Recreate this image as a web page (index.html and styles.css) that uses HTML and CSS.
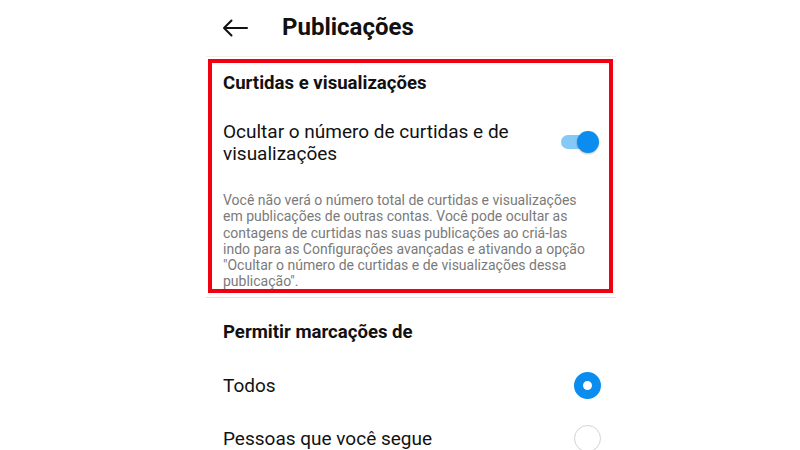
FILE: index.html
```html
<!DOCTYPE html>
<html lang="pt-BR">
<head>
<meta charset="utf-8">
<title>Publicações</title>
<link rel="stylesheet" href="styles.css">
</head>
<body>
<div class="screen">
  <header class="topbar">
    <svg class="back" width="26" height="18" viewBox="0 0 26 18" aria-hidden="true">
      <path d="M25 9H2M9.5 1.5L2 9l7.5 7.5" fill="none" stroke="#111" stroke-width="2" stroke-linecap="round" stroke-linejoin="round"/>
    </svg>
    <h1 class="title">Publicações</h1>
  </header>

  <section class="highlight">
    <h2 class="section-title">Curtidas e visualizações</h2>
    <div class="setting-row">
      <span class="setting-label">Ocultar o número de curtidas e de visualizações</span>
      <span class="switch"><span class="knob"></span></span>
    </div>
    <p class="hint">Você não verá o número total de curtidas e visualizações em publicações de outras contas. Você pode ocultar as contagens de curtidas nas suas publicações ao criá-las indo para as Configurações avançadas e ativando a opção "Ocultar o número de curtidas e de visualizações dessa publicação".</p>
  </section>

  <div class="divider"></div>

  <section class="group">
    <h2 class="section-title">Permitir marcações de</h2>
    <div class="option">
      <span class="option-label">Todos</span>
      <span class="radio checked"></span>
    </div>
    <div class="option">
      <span class="option-label">Pessoas que você segue</span>
      <span class="radio"></span>
    </div>
  </section>
</div>
</body>
</html>
```

FILE: styles.css
```css
* { box-sizing: border-box; }

html, body {
  margin: 0;
  padding: 0;
  background: #fff;
  font-family: Roboto, "Noto Sans", sans-serif;
  color: #111;
}

.screen {
  width: 410px;
  margin-left: 206px;
  height: 450px;
  overflow: hidden;
}

.topbar {
  display: flex;
  align-items: center;
  height: 57px;
  padding-left: 16px;
  border-bottom: 1px solid #f6eded;
}

.back { display: block; }

.title {
  margin: -2px 0 0 34px;
  font-size: 24px;
  font-weight: 700;
}

.highlight {
  margin: 2px 3px 0 2px;
  border: 4px solid #f00010;
  padding: 7px 10px 6px 11px;
  height: 234px;
}

.section-title {
  margin: 0;
  font-size: 18.6px;
  font-weight: 700;
  line-height: 26px;
}

.setting-row {
  display: flex;
  align-items: center;
  justify-content: space-between;
  margin-top: 25px;
}

.setting-label {
  font-size: 19px;
  line-height: 22px;
  width: 320px;
}

.switch {
  position: relative;
  width: 32px;
  height: 14px;
  border-radius: 7px;
  background: #86c8f6;
  margin-right: 6px;
  margin-top: -2px;
}

.knob {
  position: absolute;
  right: -6px;
  top: -4px;
  width: 22px;
  height: 22px;
  border-radius: 50%;
  background: #0b8df0;
  box-shadow: 0 1px 2px rgba(0,0,0,0.25);
}

.hint {
  margin: 27px 0 0;
  width: 368px;
  font-size: 14px;
  line-height: 16.3px;
  color: #7a7a7a;
}

.divider {
  height: 1px;
  background: #e2e2e2;
  margin-top: 4px;
}

.group {
  padding: 21px 16px 0 17px;
}

.option {
  display: flex;
  align-items: center;
  justify-content: space-between;
  height: 53px;
}

.group .section-title { margin-bottom: 14px; }

.option-label { font-size: 19px; }

.radio {
  width: 27px;
  height: 27px;
  border-radius: 50%;
  border: 1.5px solid #d2d2d2;
  margin-right: -1px;
}

.radio.checked {
  border: 9px solid #0b8df0;
  background: #fff;
}
```
